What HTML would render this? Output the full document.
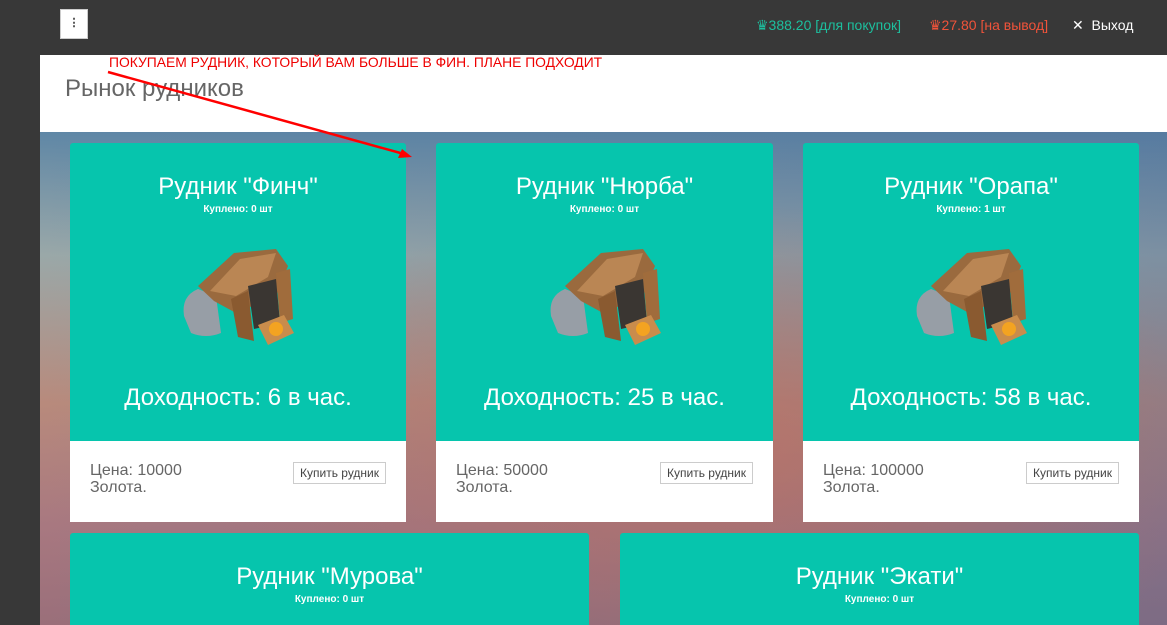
<!DOCTYPE html>
<html><head><meta charset="utf-8"><style>
*{margin:0;padding:0;box-sizing:border-box}
html,body{width:1167px;height:625px;overflow:hidden}
body{background:#383838;font-family:"Liberation Sans",Arial,sans-serif;position:relative}
.menu{position:absolute;left:60px;top:9px;width:28px;height:30px;background:#fff;border:1px solid #ccc;font-size:11px;text-align:center;line-height:27px;color:#333;font-weight:bold}
.top{position:absolute;top:17px;font-size:14px}
.hdr{position:absolute;left:40px;top:55px;width:1127px;height:77px;background:#fff}
.hdr h1{position:absolute;left:25px;top:20px;font-size:24px;font-weight:normal;color:#666}
.note{position:absolute;left:109px;top:54px;font-size:14px;color:#e00;transform:scaleX(.99);transform-origin:0 0;white-space:nowrap}
.bg{position:absolute;left:40px;top:132px;width:1127px;height:493px;background:linear-gradient(180deg,#5f87a6 0%,#9aa8a8 25%,#b88a7c 55%,#a87880 80%,#9a6f7a 100%)}
.bg:after{content:"";position:absolute;inset:0;background:radial-gradient(ellipse at 60% 65%,rgba(200,110,90,.6),rgba(200,110,90,0) 55%),linear-gradient(90deg,rgba(80,110,150,.0),rgba(70,100,150,.35))}
.card{position:absolute;background:#06c5ad;border-radius:3px 3px 0 0;color:#fff;text-align:center;z-index:1}
.card h2{font-size:24px;font-weight:normal;margin-top:30px}
.card .b{font-size:10px;font-weight:bold;margin-top:3px}
.card .inc{position:absolute;left:0;right:0;top:241px;font-size:24px}
.card svg{position:absolute;top:98px;left:50%;margin-left:-62px}
.foot{position:absolute;left:0;right:0;top:298px;height:81px;background:#fff;text-align:left;color:#666}
.foot .p{position:absolute;left:20px;top:21px;font-size:16px;line-height:17px}
.foot .btn{position:absolute;right:20px;top:21px;border:1px solid #ccc;font-size:12px;padding:3px 6px;color:#444}
</style></head><body>
<div class="menu">⋮</div>
<div class="top" style="left:756px;color:#1dbf9e">♛388.20 [для покупок]</div>
<div class="top" style="left:929px;color:#f0533a">♛27.80 [на вывод]</div>
<div class="top" style="left:1072px;color:#fff">✕&nbsp; Выход</div>
<div class="hdr"><h1>Рынок рудников</h1></div>
<div class="note">ПОКУПАЕМ РУДНИК, КОТОРЫЙ ВАМ БОЛЬШЕ В ФИН. ПЛАНЕ ПОДХОДИТ</div>
<div class="bg"></div>

<svg width="0" height="0" style="position:absolute"><defs><g id="mine">
<path d="M8 75 Q5 55 22 48 L40 55 L45 92 Q30 98 15 92 Z" fill="#979ea6"/>
<path d="M22 45 L58 12 L100 8 L112 25 L100 55 L60 72 L38 60 Z" fill="#9a6a3e"/>
<path d="M34 50 L64 18 L100 12 L92 36 L60 55Z" fill="#ba8654"/>
<path d="M72 45 L100 38 L104 82 L78 88 Z" fill="#3a3632"/>
<path d="M55 58 L72 50 L78 100 L62 96 Z" fill="#8a5a30"/>
<path d="M100 32 L114 28 L117 78 L104 82Z" fill="#a06c3c"/>
<path d="M82 84 L108 74 L118 92 L92 104Z" fill="#c98c4c"/>
<circle cx="100" cy="88" r="7" fill="#f3a321"/>
</g></defs></svg>

<div class="card" style="left:70px;top:143px;width:336px;height:379px"><h2>Рудник "Финч"</h2><div class="b">Куплено: 0 шт</div><svg width="124" height="110"><use href="#mine"/></svg><div class="inc">Доходность: 6 в час.</div><div class="foot"><div class="p">Цена: 10000<br>Золота.</div><div class="btn">Купить рудник</div></div></div>
<div class="card" style="left:436px;top:143px;width:337px;height:379px"><h2>Рудник "Нюрба"</h2><div class="b">Куплено: 0 шт</div><svg width="124" height="110"><use href="#mine"/></svg><div class="inc">Доходность: 25 в час.</div><div class="foot"><div class="p">Цена: 50000<br>Золота.</div><div class="btn">Купить рудник</div></div></div>
<div class="card" style="left:803px;top:143px;width:336px;height:379px"><h2>Рудник "Орапа"</h2><div class="b">Куплено: 1 шт</div><svg width="124" height="110"><use href="#mine"/></svg><div class="inc">Доходность: 58 в час.</div><div class="foot"><div class="p">Цена: 100000<br>Золота.</div><div class="btn">Купить рудник</div></div></div>
<div class="card" style="left:70px;top:533px;width:519px;height:92px"><h2>Рудник "Мурова"</h2><div class="b">Куплено: 0 шт</div></div>
<div class="card" style="left:620px;top:533px;width:519px;height:92px"><h2>Рудник "Экати"</h2><div class="b">Куплено: 0 шт</div></div>

<svg style="position:absolute;left:0;top:0;z-index:5" width="1167" height="625"><line x1="108" y1="72" x2="404" y2="154" stroke="#f00" stroke-width="2.5"/><path d="M412 157 L398 158 L402 149Z" fill="#f00"/></svg>
</body></html>
